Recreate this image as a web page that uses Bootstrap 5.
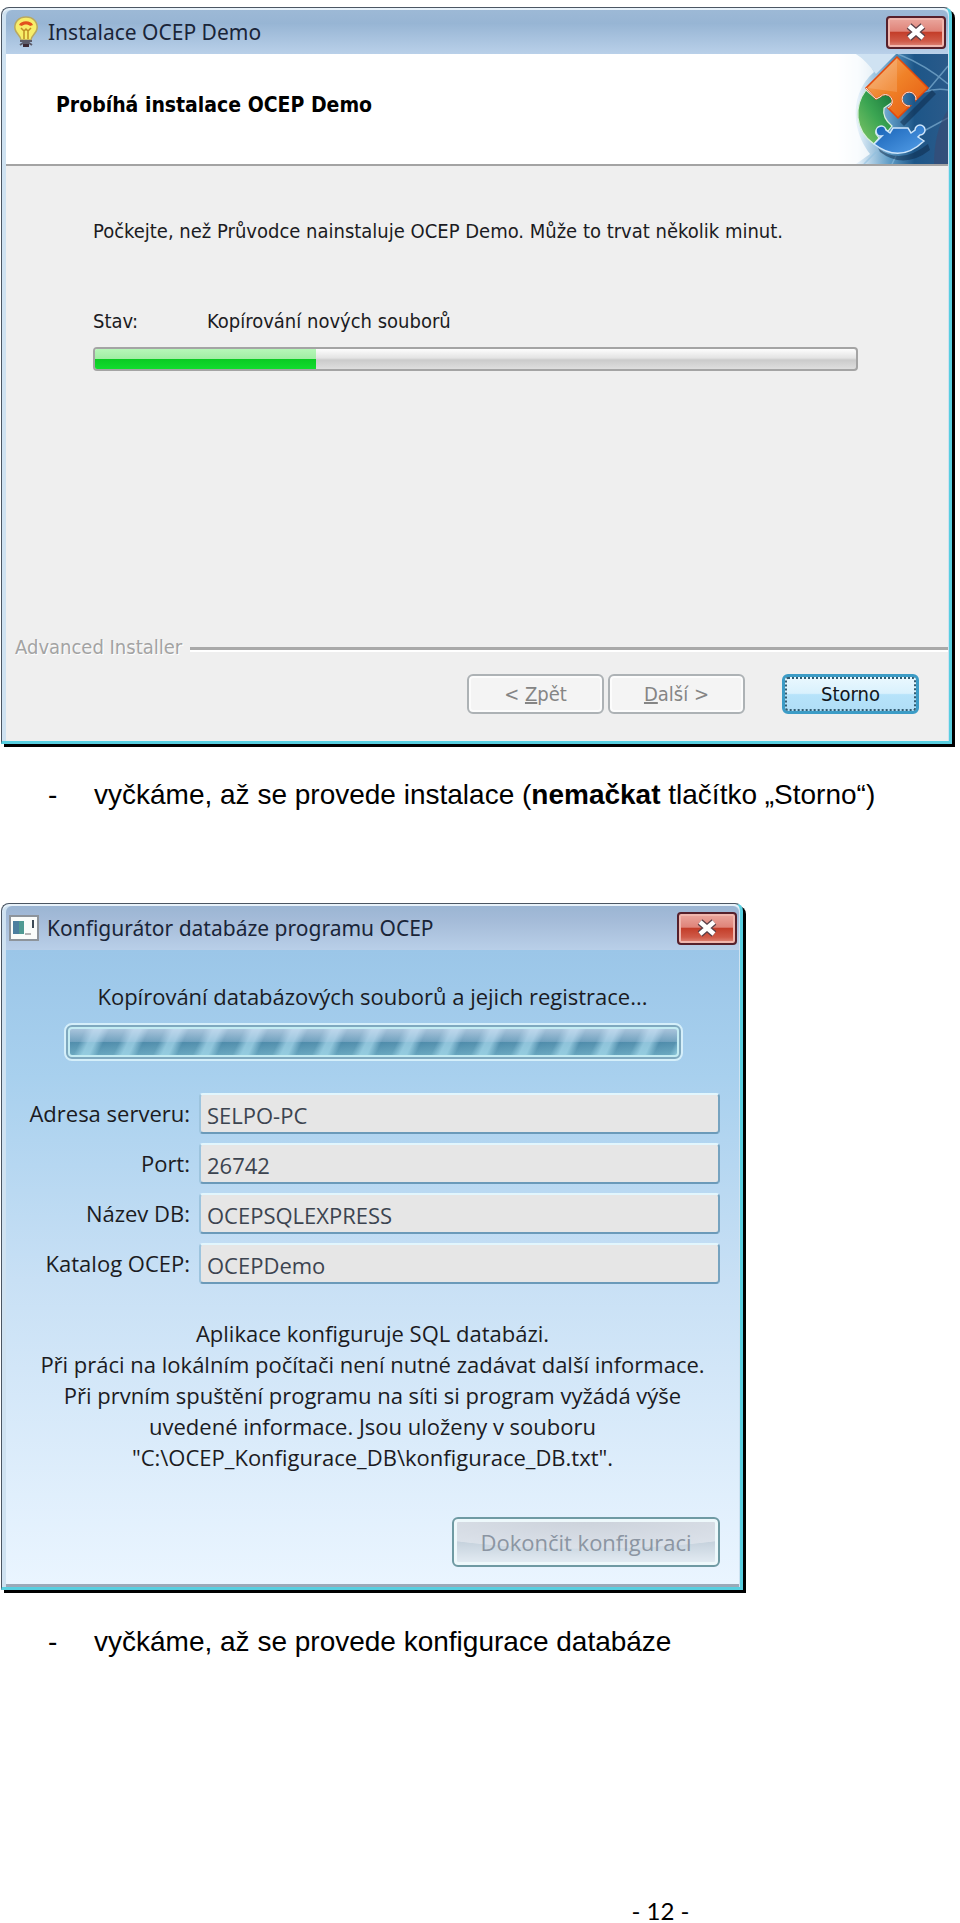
<!DOCTYPE html>
<html lang="cs">
<head>
<meta charset="utf-8">
<meta name="viewport" content="width=device-width, initial-scale=1">
<title>Instalace OCEP Demo</title>
<link rel="stylesheet" href="https://cdn.jsdelivr.net/npm/bootstrap@5.3.0/dist/css/bootstrap.min.css">
<style>
  body { background: #fff; color: #000; font-family: "Liberation Sans", Arial, sans-serif; }
  .sheet { padding: 7px 8px 0 1px; }

  /* Windows 7 style frame */
  .win { font-family: "DejaVu Sans Condensed", "DejaVu Sans", sans-serif; font-size: 20px; line-height: 30px; color: #1b1b22;
    border: 1px solid #4b5663; border-right: 3px solid #58cfe0; border-bottom: 3px solid #58cfe0;
    border-radius: 8px 8px 0 0; box-shadow: 3px 3px 0 #000, inset 0 2px 0 #e8f2fa; padding: 2px 1px 0 4px;
    background: #cfe2f1; }
  .win-config { max-width: 742px; font-family: "Open Sans", sans-serif; font-size: 22px; line-height: 31px; }
  .title-bar { background: linear-gradient(#9db9d6, #97b5d4 30%, #b9d0e9); border-radius: 6px 6px 0 0; height: 44px; padding: 0 2px 0 6px; }
  .win-config .title-bar { padding-left: 3px; background: linear-gradient(#9bb5d3, #a5bcd9 35%, #b9cfe8); }
  .title-text { font-family: "Noto Sans", sans-serif; font-size: 21px; color: #1a2538; }
  .close-btn { width: 60px; height: 33px; padding: 0; border: 2px solid #56202b; border-radius: 4px;
    background: linear-gradient(#eba89f, #df8378 46%, #c33c28 48%, #cf5a48 80%, #e08d80); box-shadow: inset 0 0 0 2px #f0b6ad; }

  .banner { background: #fff; height: 112px; border-bottom: 2px solid #a3a3a3; }
  .banner h1 { font-size: 21px; font-weight: 700; color: #000; padding: 0 0 6px 50px; }
  .install-body { background: #efefef; padding: 50px 0 27px; }
  .install-main { padding: 0 90px 0 87px; }
  .state-row { margin: 60px 0 11px; }
  .state-label { width: 114px; }
  .bar-track { height: 24px; border: 2px solid #a4a4a4; border-radius: 4px;
    background: linear-gradient(#fdfdfd, #e3e3e3 45%, #cbcbcb 55%, #dedede); }
  .bar-done { background: linear-gradient(#b6f7b8, #a0eea4 48%, #0bcb23 52%, #12dc2e); }
  .brand-row { margin: 261px 0 12px; }
  .brand { color: #a3a3a3; text-shadow: 1px 1px 0 #fff; padding-left: 9px; }
  .brand-line { border-top: 3px solid #a9a9a9; border-bottom: 2px solid #fff; height: 5px; margin-top: 5px; }
  .wiz-actions { gap: 4px; padding-right: 29px; }
  .wiz-btn { width: 137px; height: 40px; padding: 0; font-size: 20px; line-height: 28px; border: 2px solid #adb2b5; border-radius: 6px;
    background: #f4f4f4; color: #858585; box-shadow: inset 0 0 0 2px #fcfcfc; }
  .wiz-btn:disabled { color: #858585; border-color: #adb2b5; background: #f4f4f4; opacity: 1; }
  .wiz-default { margin-left: 33px; border: 3px solid #3c9cc6; color: #10161c; background: linear-gradient(#eaf8fe, #d9f1fd 48%, #b6e3fa 52%, #b0def6);
    box-shadow: none; outline: 2px dotted #335b70; outline-offset: -5px; }

  .config-body { background: linear-gradient(#9bc6e8, #a8d0ee 20%, #c8e0f5 52%, #eaf5ff); padding: 31px 19px 17px; border-bottom: 3px solid #9ba9b8; }
  .busy-text { margin-bottom: 11px; }
  .busy-track { height: 38px; margin: 0 37px 0 39px; padding: 2px; border: 2px solid #d5effa; border-radius: 8px; background: #7fa9bf; }
  .busy-stripes { border: 2px solid #c4ecf3; border-radius: 4px;
    background: linear-gradient(rgba(215,225,245,.65), rgba(190,210,235,.3) 48%, transparent 52%, rgba(160,225,235,.3)),
      repeating-linear-gradient(115deg, #4f8cab 0, #5490ae 14px, #8fc3da 22px, #8fc3da 28px, #4f8cab 36px); }
  .config-grid { display: grid; grid-template-columns: 165px 1fr; column-gap: 9px; row-gap: 9px; margin: 32px 0 34px; }
  .config-grid label { text-align: right; line-height: 41px; }
  .field { height: 41px; padding: 3px 6px 0; color: #3c4450; border: 2px solid; border-color: #e2f6fd #76a3c0 #6b9ab9 #9dc4de;
    border-radius: 4px; background: #e6e6e6; width: 100%; }
  .info { margin-bottom: 44px; }
  .finish-btn { width: 268px; height: 50px; padding: 0; font-size: 22px; border: 2px solid #6f9aa3; border-radius: 6px; }
  .finish-btn:disabled { opacity: 1; color: #8b95a2; border-color: #6f9aa3;
    background: radial-gradient(ellipse 75% 65% at 50% 0, #cbd1da, #dbe1e9 98%, transparent 100%), linear-gradient(#c3ced9, #c6d2dd 50%, #e6eef5);
    box-shadow: inset 0 0 0 3px #edf8fb; }

  .note { font-size: 28px; line-height: 40px; padding-left: 47px; margin: 31px 0 88px; }
  .note-last { margin: 32px 0 237px; }
  .dash { width: 46px; }
  .page-no { font-family: Lato, sans-serif; font-size: 24px; line-height: 24px; padding-left: 368px; }
</style>
</head>
<body>
<main class="sheet">

  <section class="win" aria-label="Instalace OCEP Demo">
    <div class="title-bar d-flex align-items-center">
      <svg width="28" height="34" viewBox="0 0 28 34" aria-hidden="true">
        <path d="M14 2C6 2 2 8 3 14c1 5 6 7 6 11h10c0-4 5-6 6-11C26 8 22 2 14 2z" fill="#f7ee6a" stroke="#b9a860" stroke-width="1.5"/>
        <path d="M7 10c2-5 12-5 14 0l-3 1c-2-2-6-2-8 0z" fill="#e2521e"/>
        <path d="M9 13l3 3 2-2 2 2 3-3M12 16v8M16 16v8" fill="none" stroke="#c08d25" stroke-width="1.5"/>
        <path d="M8 26l12 0M8 30l3-2h6l3 2" fill="none" stroke="#5c5c6a" stroke-width="2"/>
        <path d="M11 29h6v3h-6z" fill="#3c2a34"/>
      </svg>
      <span class="title-text ms-2 flex-grow-1">Instalace OCEP Demo</span>
      <button class="btn close-btn d-flex align-items-center justify-content-center" type="button" aria-label="Zavřít">
        <svg width="24" height="18" viewBox="0 0 24 18" aria-hidden="true"><path d="M5 3l14 12M19 3L5 15" stroke="#5a4048" stroke-width="7"/><path d="M5 3l14 12M19 3L5 15" stroke="#fff" stroke-width="4.4"/></svg>
      </button>
    </div>

    <div class="banner d-flex align-items-center justify-content-between">
      <h1 class="m-0">Probíhá instalace OCEP Demo</h1>
      <svg class="align-self-stretch" width="112" height="110" viewBox="0 0 112 110" aria-hidden="true">
        <defs>
          <linearGradient id="sky" x1="0" y1="0" x2="1" y2="0"><stop offset="0" stop-color="#fff"/><stop offset=".2" stop-color="#e4f0f9"/><stop offset=".48" stop-color="#5f9cc6"/><stop offset=".7" stop-color="#1d5688"/><stop offset="1" stop-color="#2a5a8a"/></linearGradient>
          <linearGradient id="org" x1="0" y1="0" x2="1" y2="1"><stop offset="0" stop-color="#f8b57a"/><stop offset=".45" stop-color="#f08228"/><stop offset="1" stop-color="#e4570e"/></linearGradient>
          <linearGradient id="grn" x1="1" y1="0" x2="0" y2="1"><stop offset="0" stop-color="#14703a"/><stop offset=".5" stop-color="#3ba552"/><stop offset="1" stop-color="#85c768"/></linearGradient>
          <linearGradient id="blu" x1="0" y1="0" x2="1" y2="1"><stop offset="0" stop-color="#1560b5"/><stop offset="1" stop-color="#559fe8"/></linearGradient>
        </defs>
        <path d="M0 0h112v110H0z" fill="url(#sky)"/>
        <path d="M0 0h20c10 6 14 10 18 18C24 30 18 48 20 66c2 16 8 26 14 34l-14 10H0z" fill="#fff" opacity=".75"/>
        <path d="M20 0h40L40 20C34 12 28 5 20 0z" fill="#cfe2f2"/>
        <path d="M62 0c20 8 36 18 50 30M92 36l20-24M88 38q12-4 24-2M86 78l26-14M60 102l-4 8M40 98l-12 12" stroke="#8fbfe0" stroke-width="1.5" fill="none" opacity=".6"/>
        <path d="M112 56c-10 14-14 34-14 54h14z" fill="#3a4a72" opacity=".6"/>
        <g transform="translate(2 0)">
          <path d="M62 68L94 36 98 40 66 72zM40 94q22 18 50-4l2 6q-26 20-50 2z" fill="#0c2748" opacity=".5"/>
          <path d="M28 36L36 43 44 40A7 7 0 0 1 56 47L46 54Q44 64 54 72L50 77 45 74A5 5 0 0 0 38 80L41 84 36 90C16 76 16 52 28 36z" fill="url(#grn)" stroke="#d9f0dc" stroke-width="1.2"/>
          <path d="M59 3L90 34 78 46A7 7 0 1 0 72 52L60 64 50 54A7 7 0 1 0 42 43L38 45 28 34z" fill="url(#org)" stroke="#e4480c" stroke-width="1.5"/>
          <path d="M78 46A7 7 0 1 0 72 52M50 54A7 7 0 1 0 42 43L38 45 28 34" fill="none" stroke="#f3eee6" stroke-width="1"/>
          <path d="M59 4v34L30 34z" fill="#fff" opacity=".15"/>
          <path d="M36 90L44 82A5 5 0 1 1 48 76L52 79 55 74H70L73 79 77 76A5 5 0 1 1 82 81L80 83 86 87Q62 110 36 90z" fill="url(#blu)" stroke="#cfe6fb" stroke-width="1.5"/>
        </g>
      </svg>
    </div>

    <div class="install-body">
      <div class="install-main">
        <p class="mb-0">Počkejte, než Průvodce nainstaluje OCEP Demo. Může to trvat několik minut.</p>
        <div class="state-row d-flex"><span class="state-label">Stav:</span><span>Kopírování nových souborů</span></div>
        <div class="progress bar-track" role="progressbar" aria-label="Stav" aria-valuenow="29" aria-valuemin="0" aria-valuemax="100">
          <div class="progress-bar bar-done" style="width:29%"></div>
        </div>
      </div>
      <div class="brand-row d-flex align-items-center">
        <span class="brand">Advanced Installer</span><span class="brand-line flex-grow-1 ms-2"></span>
      </div>
      <div class="wiz-actions d-flex justify-content-end">
        <button class="btn wiz-btn" type="button" disabled>&lt; <u>Z</u>pět</button>
        <button class="btn wiz-btn" type="button" disabled><u>D</u>alší &gt;</button>
        <button class="btn wiz-btn wiz-default" type="button">Storno</button>
      </div>
    </div>
  </section>

  <div class="note d-flex"><span class="dash">-</span><span>vyčkáme, až se provede instalace (<b>nemačkat</b> tlačítko „Storno“)</span></div>

  <section class="win win-config" aria-label="Konfigurátor databáze programu OCEP">
    <div class="title-bar d-flex align-items-center">
      <svg width="30" height="26" viewBox="0 0 30 26" aria-hidden="true">
        <path d="M1 1h28v24H1z" fill="#fafcfa" stroke="#8d949b" stroke-width="2"/>
        <path d="M4 6h11v13H4z" fill="#4f9a92"/><path d="M4 6h6v13H4z" fill="#4c7f9f"/>
        <path d="M24 5v8" stroke="#3d4a55" stroke-width="2"/><path d="M16 19h6" stroke="#b4b4b4" stroke-width="2"/>
      </svg>
      <span class="title-text ms-2 flex-grow-1">Konfigurátor databáze programu OCEP</span>
      <button class="btn close-btn d-flex align-items-center justify-content-center" type="button" aria-label="Zavřít">
        <svg width="24" height="18" viewBox="0 0 24 18" aria-hidden="true"><path d="M5 3l14 12M19 3L5 15" stroke="#5a4048" stroke-width="7"/><path d="M5 3l14 12M19 3L5 15" stroke="#fff" stroke-width="4.4"/></svg>
      </button>
    </div>
    <form class="config-body">
      <p class="busy-text text-center">Kopírování databázových souborů a jejich registrace...</p>
      <div class="busy-track d-flex" role="progressbar" aria-label="Kopírování"><div class="busy-stripes flex-grow-1"></div></div>
      <div class="config-grid">
        <label for="srv">Adresa serveru:</label><input class="field" id="srv" type="text" value="SELPO-PC" readonly>
        <label for="port">Port:</label><input class="field" id="port" type="text" value="26742" readonly>
        <label for="dbn">Název DB:</label><input class="field" id="dbn" type="text" value="OCEPSQLEXPRESS" readonly>
        <label for="cat">Katalog OCEP:</label><input class="field" id="cat" type="text" value="OCEPDemo" readonly>
      </div>
      <p class="info text-center">Aplikace konfiguruje SQL databázi.<br>Při práci na lokálním počítači není nutné zadávat další informace.<br>Při prvním spuštění programu na síti si program vyžádá výše<br>uvedené informace. Jsou uloženy v souboru<br>"C:\OCEP_Konfigurace_DB\konfigurace_DB.txt".</p>
      <div class="d-flex justify-content-end"><button class="btn finish-btn" type="button" disabled>Dokončit konfiguraci</button></div>
    </form>
  </section>

  <div class="note note-last d-flex"><span class="dash">-</span><span>vyčkáme, až se provede konfigurace databáze</span></div>
  <footer class="page-no text-center">- 12 -</footer>
</main>
<script src="https://cdn.jsdelivr.net/npm/bootstrap@5.3.0/dist/js/bootstrap.bundle.min.js"></script>
</body>
</html>
